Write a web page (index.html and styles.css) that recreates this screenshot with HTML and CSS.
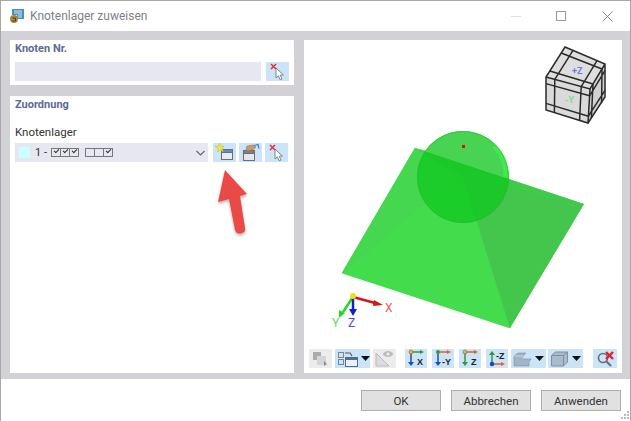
FILE: index.html
```html
<!DOCTYPE html>
<html lang="de">
<head>
  <meta charset="UTF-8" />
  <title>Knotenlager zuweisen</title>
  <link rel="stylesheet" href="styles.css">
</head>
<body>
  <svg class="defs" width="0" height="0">
    <symbol id="pick" viewBox="0 0 23 19">
      <path d="M10 6l0 10 2.400-2.200 1.800 4 1.800-.8-1.800-3.900 3.200-.1z" fill="#fff" stroke="#7d858c" stroke-width="1"/>
      <path d="M5 2l5 5M10 2l-5 5" stroke="#e0343c" stroke-width="1.600"/>
    </symbol>
    <symbol id="caret" viewBox="0 0 9 5">
      <path d="M0 0h9L4.500 5z" fill="#111"/>
    </symbol>
    <filter id="soft" x="-20%" y="-20%" width="140%" height="140%">
      <feGaussianBlur stdDeviation="1.500"/>
    </filter>
  </svg>

  <div class="window">
    <div class="titlebar">
      <svg class="app-icon" width="16" height="16" viewBox="0 0 16 16">
        <path d="M3 1h12v10H8V7H3z" fill="#4a8fc4"/>
        <path d="M5 3h8M5 5h8M9 7h4M9 9h4" stroke="#cfe4f4" stroke-width="1"/>
        <circle cx="5" cy="11" r="4" fill="#a88a3c"/>
        <path d="M3.500 10h3v3h-3" fill="none" stroke="#4e4222" stroke-width="1"/>
      </svg>
      <span class="title">Knotenlager zuweisen</span>
      <div class="win-controls">
        <span class="win-min"></span>
        <span class="win-max"></span>
        <svg class="win-close" width="11" height="11" viewBox="0 0 11 11"><path d="M.5.5l10 10M10.500.5l-10 10" stroke="#8a8a8a" stroke-width="1"/></svg>
      </div>
    </div>

    <div class="main">
      <div class="left">
        <section class="panel panel-node">
          <h2>Knoten Nr.</h2>
          <div class="row">
            <div class="field"></div>
            <button class="tool"><svg width="23" height="19"><use href="#pick"/></svg></button>
          </div>
        </section>

        <section class="panel panel-assign">
          <h2>Zuordnung</h2>
          <label>Knotenlager</label>
          <div class="row">
            <div class="combo">
              <span class="swatch"></span>
              <span class="combo-num">1 -</span>
              <span class="checks">
                <i class="chk on"></i><i class="chk on"></i><i class="chk on"></i>
              </span>
              <span class="checks">
                <i class="chk"></i><i class="chk"></i><i class="chk on"></i>
              </span>
              <svg class="chevron" width="9" height="6" viewBox="0 0 9 6"><path d="M.5 1l4 4 4-4" fill="none" stroke="#666" stroke-width="1.100"/></svg>
            </div>
            <button class="tool">
              <svg width="23" height="19" viewBox="0 0 23 19">
                <rect x="8.500" y="6.500" width="11" height="10" fill="#e8ebee" stroke="#6a6f75"/>
                <rect x="8.500" y="6.500" width="11" height="3" fill="#5b8ec4" stroke="#6a6f75"/>
                <path d="M6.500 0l1.300 3.400 3.400-.4-2.200 2.500 1.400 3.300-3-1.700-3 1.700.9-3.300L2 3.200l3.400.1z" fill="#f4ea3a" stroke="#c7b42a" stroke-width=".5"/>
              </svg>
            </button>
            <button class="tool">
              <svg width="23" height="19" viewBox="0 0 23 19">
                <rect x="4.500" y="7.500" width="11" height="10" fill="#e4e6e8" stroke="#6a6f75"/>
                <rect x="4.500" y="7.500" width="11" height="3" fill="#7b7f86" stroke="#6a6f75"/>
                <path d="M7 6l1-3 6-1 3 2-3 3-6 1z" fill="#c99a72" stroke="#8a6a4c" stroke-width=".5"/>
                <path d="M15 2.500l4-1 1 4" fill="none" stroke="#3f7fc0" stroke-width="1.200"/>
              </svg>
            </button>
            <button class="tool"><svg width="23" height="19"><use href="#pick"/></svg></button>
          </div>
        </section>
      </div>

      <section class="viewer">
        <svg class="scene" width="318" height="306" viewBox="304 40 318 306">
          <!-- pyramid, base silhouette first so the faces leave no seams -->
          <polygon points="415,148 584,204 510,328 342,273" fill="#42d64c"/>
          <polygon points="415,148 342,273 423,205 463,177" fill="#45d74f" stroke="#45d74f" stroke-width=".5"/>
          <polygon points="342,273 510,328 463,177 423,205" fill="#42dc4c" stroke="#42dc4c" stroke-width=".5"/>
          <polygon points="463,177 510,328 584,204" fill="#44c64c"/>
          <polygon points="415,148 584,204 463,177" fill="#3fca49"/>
          <!-- sphere -->
          <circle cx="463" cy="177" r="46" fill="#0cc81c" fill-opacity=".72"/>
          <path d="M425.500 150.500L415 148 508.500 178.500A46 46 0 0 0 463 131 46 46 0 0 0 425.500 150.500z" fill="#48d452"/>
          <path d="M496 145a46 46 0 0 1 12.500 33l-5-1.600a40 40 0 0 0-11-29z" fill="#40ea4c"/>
          <circle cx="463" cy="177" r="45.500" fill="none" stroke="#22b82e" stroke-opacity=".5"/>
          <rect x="462" y="145" width="3" height="3" fill="#e01010"/>

          <!-- axes -->
          <path d="M353 297l22 6" stroke="#d01818" stroke-width="2.500"/>
          <path d="M374 300l9 5-10 1z" fill="#d01818"/>
          <path d="M353 297l-10 15" stroke="#22d822" stroke-width="2.500"/>
          <path d="M339 310l6 3-6 5z" fill="#22d822"/>
          <path d="M353 297v13" stroke="#1420c0" stroke-width="2.500"/>
          <path d="M349 309h8l-4 7z" fill="#1420c0"/>
          <circle cx="353" cy="296" r="3" fill="#f2e016"/>
          <text x="385" y="312" class="axis axis-x">X</text>
          <text x="332" y="327" class="axis axis-y">Y</text>
          <text x="348" y="327" class="axis axis-z">Z</text>

          <!-- orientation cube -->
          <g class="cube">
            <polygon points="565,47 605,64 590,89 546,77" fill="#dedede"/>
            <polygon points="546,77 590,89 588,123 546,110" fill="#dadada"/>
            <polygon points="590,89 605,64 605,97 588,123" fill="#d2d0d0"/>
            <path d="M565 47L605 64 605 97 588 123 546 110 546 77zM546 77L590 89 605 64M590 89L588 123"/>
            <path d="M561.200 53L602 69M549.800 71L593 84M573 50.400L554.800 79.400M597 60.600L581.200 86.600"/>
            <path d="M546 83.600L589.600 95.800M546 103.400L588.400 116.200M554.800 79.400L554.400 112.600M581.200 86.600L579.600 120.400"/>
            <path d="M589.600 95.800L605 70.600M588.400 116.200L605 90.400M593 84L591.400 117.800M602 69L601.600 102.800"/>
          </g>
          <text class="cube-z" x="572" y="74">+Z</text>
          <text class="cube-y" x="565" y="103">-Y</text>
        </svg>

        <div class="viewer-tools">
          <button class="vt vt-off">
            <svg width="23" height="19" viewBox="0 0 23 19"><rect x="4" y="3" width="8" height="8" fill="#a9abad"/><rect x="8" y="7" width="9" height="9" fill="#d4d5d6"/><path d="M15 12l3 3-3 2z" fill="#8c8e90"/></svg>
          </button>
          <button class="vt vt-drop vt-first">
            <svg width="25" height="19" viewBox="0 0 25 19"><rect x="3.500" y="3.500" width="5" height="5" fill="none" stroke="#7a8590"/><rect x="3.500" y="10.500" width="5" height="5" fill="none" stroke="#7a8590"/><path d="M10 4h5l2 3" fill="none" stroke="#555" stroke-width="1.200"/><rect x="10.500" y="8.500" width="12" height="9" fill="#eef1f3" stroke="#4d6f96"/><rect x="10.500" y="8.500" width="12" height="2.500" fill="#4d6f96"/></svg>
            <svg class="caret" width="9" height="5"><use href="#caret"/></svg>
          </button>
          <button class="vt vt-off">
            <svg width="23" height="19" viewBox="0 0 23 19"><path d="M3 17V4l13 13z" fill="#dcdcdc" stroke="#bcbcbc"/><ellipse cx="15" cy="5" rx="5" ry="3" fill="#bdbdbd"/><circle cx="15" cy="5" r="1.500" fill="#eee"/></svg>
          </button>

          <button class="vt vt-axis vt-x">
            <svg width="22" height="19" viewBox="0 0 22 19"><path d="M6 3v12" stroke="#1b4fb5" stroke-width="1.500"/><path d="M3 13h6l-3 4z" fill="#1b4fb5"/><path d="M7 3h9" stroke="#2f9a3a" stroke-width="1.500"/><path d="M15 1l4 2-4 2z" fill="#2f9a3a"/><circle cx="6" cy="3" r="2" fill="#e8c020" stroke="#c04040" stroke-width=".6"/><text x="12" y="16" class="axis-label">X</text></svg>
          </button>
          <button class="vt vt-axis">
            <svg width="22" height="19" viewBox="0 0 22 19"><path d="M6 3v12" stroke="#1b4fb5" stroke-width="1.500"/><path d="M3 13h6l-3 4z" fill="#1b4fb5"/><path d="M7 3h9" stroke="#e0602c" stroke-width="1.500"/><path d="M15 1l4 2-4 2z" fill="#e0602c"/><circle cx="6" cy="3" r="2" fill="#2fa03a"/><text x="10" y="16" class="axis-label">-Y</text></svg>
          </button>
          <button class="vt vt-axis">
            <svg width="22" height="19" viewBox="0 0 22 19"><path d="M6 4v10" stroke="#2f9a3a" stroke-width="1.500"/><path d="M3 13h6l-3 4z" fill="#2f9a3a"/><path d="M7 3h9" stroke="#e0602c" stroke-width="1.500"/><path d="M15 1l4 2-4 2z" fill="#e0602c"/><circle cx="6" cy="3" r="2" fill="#e8c020" stroke="#4060c0" stroke-width=".6"/><text x="12" y="16" class="axis-label">Z</text></svg>
          </button>
          <button class="vt vt-axis">
            <svg width="22" height="19" viewBox="0 0 22 19"><path d="M6 15V5" stroke="#2f9a3a" stroke-width="1.500"/><path d="M3 6l3-4 3 4z" fill="#2f9a3a"/><path d="M7 15h9" stroke="#e0602c" stroke-width="1.500"/><path d="M15 13l4 2-4 2z" fill="#e0602c"/><circle cx="6" cy="15" r="2.200" fill="#1b3fc5"/><text x="10" y="10" class="axis-label">-Z</text></svg>
          </button>
          <button class="vt vt-drop vt-view vt-stairs">
            <svg width="23" height="19" viewBox="0 0 23 19"><path d="M3 7l4-3h8l-3 3v3h8l-2 3v4H3z" fill="#a2b5c8" stroke="#7d90a4" stroke-width=".6"/><path d="M3 7h9v3" fill="none" stroke="#c9d5e0"/></svg>
            <svg class="caret" width="9" height="5"><use href="#caret"/></svg>
          </button>
          <button class="vt vt-drop vt-view">
            <svg width="23" height="19" viewBox="0 0 23 19"><path d="M3.500 6.500l4-3.500h12v10l-4 4h-12z" fill="#a9bbcd" stroke="#7d90a4"/><path d="M3.500 6.500h12V17M15.500 6.500l4-3.500" fill="none" stroke="#7d90a4"/></svg>
            <svg class="caret" width="9" height="5"><use href="#caret"/></svg>
          </button>
          <button class="vt vt-reset">
            <svg width="24" height="19" viewBox="0 0 24 19"><circle cx="10" cy="9" r="4.500" fill="none" stroke="#64707c" stroke-width="1.600"/><path d="M13 12l5 5" stroke="#64707c" stroke-width="2"/><path d="M13 3l7 7M20 3l-7 7" stroke="#e01f2a" stroke-width="2.400"/></svg>
          </button>
        </div>
      </section>
    </div>

    <div class="footer">
      <button class="btn">OK</button>
      <button class="btn">Abbrechen</button>
      <button class="btn">Anwenden</button>
    </div>

    <svg class="grip" width="11" height="11" viewBox="0 0 11 11">
      <path d="M8 1h2v2H8zM5 4h2v2H5zM8 4h2v2H8zM2 7h2v2H2zM5 7h2v2H5zM8 7h2v2H8z" fill="#b9b9b9"/>
    </svg>

    <!-- red callout arrow -->
    <svg class="callout" width="50" height="80" viewBox="206 163 50 80">
      <path d="M225 170L218 202 229 199 235 230Q237 235 242 233 246 232 245 228L240 196 247 194Z" fill="#555" opacity=".45" filter="url(#soft)" transform="translate(0 2)"/>
      <path d="M225 170L218 202 229 199 235 230Q237 235 242 233 246 232 245 228L240 196 247 194Z" fill="#e94a45"/>
    </svg>
  </div>
</body>
</html>
```

FILE: styles.css
```css
body {
  font-family: Roboto, "Open Sans", Arial, sans-serif;
  margin: 0;
  padding: 0;
  background: #fff;
}

.defs {
  position: absolute;
}

.window {
  position: relative;
  box-sizing: border-box;
  width: 631px;
  height: 421px;
  display: flex;
  flex-direction: column;
  border: 1px solid #a8a8a8;
  border-bottom: none;
  overflow: hidden;
}

.titlebar {
  height: 30px;
  display: flex;
  align-items: center;
  padding-left: 8px;
  background: #fff;
}

.title {
  margin-left: 5px;
  font-size: 12px;
  color: #7d8288;
}

.win-controls {
  margin-left: auto;
  display: flex;
  align-items: center;
  padding-right: 17px;
}

.win-min {
  width: 10px;
  height: 1px;
  background: #e0e0e0;
  margin-right: 35px;
}

.win-max {
  box-sizing: border-box;
  width: 10px;
  height: 10px;
  border: 1px solid #999;
  margin-right: 36px;
}

.main {
  height: 348px;
  box-sizing: border-box;
  display: flex;
  gap: 10px;
  padding: 9px 8px 6px 9px;
  background: #d2d2d6;
}

.left {
  width: 284px;
  display: flex;
  flex-direction: column;
  gap: 11px;
}

.panel {
  background: #fff;
  box-sizing: border-box;
  padding: 1px 5px;
}

.panel-node {
  height: 45px;
}

.panel-assign {
  flex: 1;
}

.panel h2 {
  margin: 0;
  font-size: 11px;
  line-height: 15px;
  font-weight: 700;
  color: #5a6a96;
}

.panel label {
  display: block;
  margin-top: 13px;
  margin-bottom: 3px;
  font-size: 11.500px;
  line-height: 15px;
  color: #333;
}

.panel-node .row {
  margin-top: 6px;
}

.row {
  display: flex;
  align-items: center;
  gap: 3px;
}

.field {
  width: 246px;
  height: 19px;
  margin-right: 2px;
  background: #e6e7f1;
}

.tool {
  width: 23px;
  height: 19px;
  padding: 0;
  border: none;
  background: #cce4f7;
  display: block;
}

.tool svg,
.vt svg {
  display: block;
}

.combo {
  width: 193px;
  height: 19px;
  margin-right: 2px;
  box-sizing: border-box;
  padding-left: 4px;
  display: flex;
  align-items: center;
  background: #e6e7f1;
  font-size: 11px;
  color: #333;
}

.swatch {
  width: 11px;
  height: 11px;
  background: #ccffff;
}

.combo-num {
  margin-left: 5px;
  margin-right: 3px;
  width: 13px;
}

.checks {
  display: flex;
  margin-right: 7px;
}

.chk {
  box-sizing: border-box;
  display: block;
  width: 10px;
  height: 9px;
  border: 1px solid #777;
  margin-right: -1px;
  position: relative;
}

.chk.on::after {
  content: "";
  position: absolute;
  left: 2px;
  top: 0;
  width: 4px;
  height: 2px;
  border-left: 1px solid #333;
  border-bottom: 1px solid #333;
  transform: rotate(-45deg);
}

.chevron {
  margin-left: auto;
  margin-right: 3px;
}

.viewer {
  width: 318px;
  background: #fff;
  display: flex;
  flex-direction: column;
}

.scene {
  display: block;
  flex: none;
}

.cube path {
  fill: none;
  stroke: #2a2a2a;
  stroke-width: 1.500;
}

.cube-z {
  font-size: 9px;
  font-weight: 700;
  fill: #6f78e8;
}

.cube-y {
  font-size: 9px;
  font-weight: 700;
  fill: #86dc88;
}

.axis {
  font-size: 12px;
}

.axis-x {
  fill: #f05858;
}

.axis-y {
  fill: #5ade5a;
}

.axis-z {
  fill: #5050e4;
}

.axis-label {
  font-size: 9px;
  font-weight: 700;
  fill: #222;
}

.viewer-tools {
  display: flex;
  padding: 3px 0 0 5px;
}

.vt {
  height: 19px;
  padding: 0;
  border: none;
  background: #cce4f7;
  display: flex;
  align-items: center;
  flex: none;
}

.vt-off {
  width: 23px;
  background: #ececec;
}

.vt-first {
  margin: 0 3px;
  width: 35px;
}

.vt-x {
  margin-left: 9px;
}

.vt-axis {
  width: 22px;
  margin-right: 5px;
}

.vt-axis:nth-child(7) {
  margin-right: 3px;
}

.vt-view {
  width: 35px;
}

.vt-stairs {
  margin-right: 2px;
}

.vt-reset {
  width: 24px;
  margin-left: 10px;
}

.caret {
  margin-left: 1px;
}

.footer {
  flex: 1;
  display: flex;
  justify-content: flex-end;
  align-items: flex-start;
  gap: 10px;
  padding: 11px 9px 0 0;
  background: #fff;
}

.btn {
  width: 80px;
  height: 21px;
  padding: 0;
  background: #e1e1e1;
  border: 1px solid #adadad;
  font-family: inherit;
  font-size: 11.500px;
  color: #333;
}

.grip {
  position: absolute;
  right: 0;
  bottom: 0;
}

.callout {
  position: absolute;
  left: 205px;
  top: 162px;
}
```
